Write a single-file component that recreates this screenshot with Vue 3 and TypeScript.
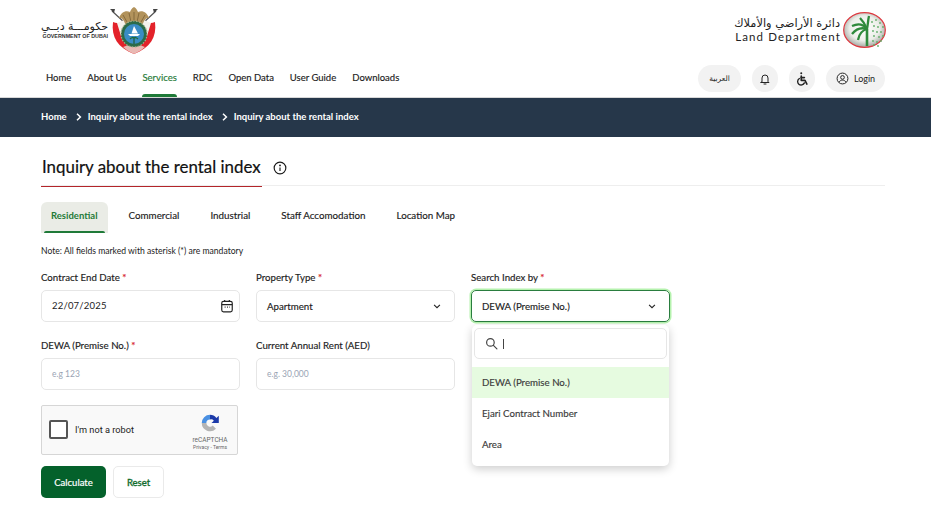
<script setup lang="ts">
import { ref } from 'vue'

const navItems = ['Home', 'About Us', 'Services', 'RDC', 'Open Data', 'User Guide', 'Downloads']
const tabs = ['Residential', 'Commercial', 'Industrial', 'Staff Accomodation', 'Location Map']
const options = ['DEWA (Premise No.)', 'Ejari Contract Number', 'Area']
const activeTab = ref('Residential')
const activeNav = ref('Services')
const palmFronds = [
  'M24 17C20 12 16 11 9 14',
  'M24 17C18 15 13 17 9 22',
  'M24 17C20 18 16 22 15 28',
  'M24 17C22 12 20 9 17 6',
  'M24 17C25 12 25 8 26 4',
]
const palmDots = [
  [29, 10], [33, 8], [37, 11], [31, 14], [35, 15], [40, 15], [30, 19], [34, 20], [38, 20],
  [31, 24], [36, 25], [40, 24], [30, 29], [34, 30], [38, 29], [31, 33], [35, 34],
]
</script>

<template>
  <div class="page">
    <header class="brand-row">
      <div class="gov-logo">
        <div class="gov-text">
          <span class="gov-ar">حكومـــة دبــي</span>
          <span class="gov-en">GOVERNMENT OF DUBAI</span>
        </div>
        <svg class="emblem" width="48" height="49" viewBox="0 0 48 49">
          <path d="M2 5l13 12M46 5L33 17" stroke="#555" stroke-width="1.2" />
          <path d="M0 3l5 0-1 4zM48 3l-5 0 1 4z" fill="#444" />
          <path d="M3 16c4 2 7 1 10-1h22c3 2 6 3 10 1 2 15-5 26-21 32C8 42 1 31 3 16z" fill="#e3222a" />
          <path d="M7 17l7-3 4 6-7 10zM41 17l-7-3-4 6 7 10z" fill="#f6f2ec" />
          <path d="M13 41c3 3 7 5 11 7 4-2 8-4 11-7l-11-4z" fill="#e9b9b4" />
          <path d="M24 1c2.500 1 3 3 4 5 5-2 9 1 11 6-2.500-.5-3 .5-5 3l-2 5H16l-2-5c-2-2.500-2.500-3.500-5-3 2-5 6-8 11-6 1-2 1.500-4 4-5z" fill="#b2935c" />
          <path d="M13 9l4 7M19 7l2 9M29 7l-2 9M35 9l-4 7M24 6v10" stroke="#7a5f36" stroke-width=".8" />
          <circle cx="24" cy="28" r="13" fill="#2c6b48" />
          <circle cx="24" cy="28" r="13" fill="none" stroke="#a3b18a" stroke-width="1.200" stroke-dasharray="1.500 1.500" />
          <circle cx="24" cy="28" r="10" fill="#3a8cc4" />
          <path d="M18 28h12l-2 2h-8z" fill="#fff" />
          <path d="M24 20l4 7.500h-6.500z" fill="#fff" />
          <path d="M24 38v-6" stroke="#1e5c34" stroke-width="1.200" />
          <path d="M24 32c-2-1-3 0-4 1M24 32c2-1 3 0 4 1M24 32c-1-1-2-1-2 0M24 32c1-1 2-1 2 0" stroke="#1e6c3a" stroke-width="1.100" fill="none" />
        </svg>
      </div>
      <div class="land-logo">
        <div class="land-text">
          <span class="land-ar">دائرة الأراضي والأملاك</span>
          <span class="land-en">Land Department</span>
        </div>
        <svg width="43" height="36" viewBox="0 0 43 36">
          <defs>
            <radialGradient id="globe" cx="50%" cy="45%" r="55%">
              <stop offset="0%" stop-color="#ffffff" />
              <stop offset="65%" stop-color="#eceee9" />
              <stop offset="100%" stop-color="#a4a8a2" />
            </radialGradient>
          </defs>
          <ellipse cx="21.500" cy="18" rx="20.800" ry="17.300" fill="url(#globe)" stroke="#dd3940" stroke-width="1.200" />
          <path d="M24 17v17" stroke="#2f8a3c" stroke-width="2.600" />
          <path v-for="d in palmFronds" :key="d" :d="d" stroke="#2f8a3c" stroke-width="2.300" fill="none" />
          <circle v-for="p in palmDots" :key="p.join()" :cx="p[0]" :cy="p[1]" r=".9" fill="#62ad69" />
        </svg>
      </div>
    </header>

    <nav class="nav-row">
      <ul class="nav-list">
        <li v-for="item in navItems" :key="item" class="nav-item" :class="{ active: item === activeNav }">{{ item }}</li>
      </ul>
      <div class="nav-actions">
        <button class="pill lang">العربية</button>
        <button class="pill round">
          <svg width="12" height="12" viewBox="0 0 24 24" fill="none" stroke="#222" stroke-width="2" stroke-linecap="round" stroke-linejoin="round">
            <path d="M6 17V10a6 6 0 0 1 12 0v7l2 2H4z" />
            <path d="M10 22h4" />
          </svg>
        </button>
        <button class="pill round">
          <svg width="15" height="15" viewBox="0 0 24 24" fill="none" stroke="#222" stroke-width="2.600" stroke-linecap="round" stroke-linejoin="round">
            <circle cx="10" cy="3.500" r="1.600" fill="#222" stroke="none" />
            <path d="M10 8v7h6l3 6" />
            <path d="M10 10.500h5" />
            <path d="M7 12a5.600 5.600 0 1 0 8 7" stroke-width="2.200" />
          </svg>
        </button>
        <button class="pill login">
          <svg width="13" height="13" viewBox="0 0 24 24" fill="none" stroke="#222" stroke-width="1.800">
            <circle cx="12" cy="12" r="10" />
            <circle cx="12" cy="10" r="3.400" />
            <path d="M5.500 19c1.500-3 4-4 6.500-4s5 1 6.500 4" />
          </svg>
          Login
        </button>
      </div>
    </nav>

    <div class="crumbs">
      <span>Home</span>
      <svg class="crumb-sep" width="6" height="8" viewBox="0 0 6 8" fill="none" stroke="#fff" stroke-width="1.500"><path d="M1 .8L4.400 4 1 7.200" /></svg>
      <span>Inquiry about the rental index</span>
      <svg class="crumb-sep" width="6" height="8" viewBox="0 0 6 8" fill="none" stroke="#fff" stroke-width="1.500"><path d="M1 .8L4.400 4 1 7.200" /></svg>
      <span>Inquiry about the rental index</span>
    </div>

    <main class="content">
      <div class="title-row">
        <h1 class="title">Inquiry about the rental index</h1>
        <svg width="14" height="14" viewBox="0 0 24 24" fill="none" stroke="#1a1a1a" stroke-width="2">
          <circle cx="12" cy="12" r="10" />
          <path d="M12 11v6" />
          <circle cx="12" cy="7.500" r=".6" />
        </svg>
      </div>

      <div class="tabs">
        <div v-for="tab in tabs" :key="tab" class="tab" :class="{ active: tab === activeTab }">{{ tab }}</div>
      </div>

      <p class="note">Note: All fields marked with asterisk (*) are mandatory</p>

      <div class="form-grid">
        <div class="field">
          <label>Contract End Date <i>*</i></label>
          <div class="box date">
            <span>22/07/2025</span>
            <svg width="14" height="14" viewBox="0 0 24 24" fill="none" stroke="#222" stroke-width="2" stroke-linejoin="round">
              <rect x="3" y="4" width="18" height="18" rx="3" />
              <path d="M3 9.500h18M8 1.500V5M16 1.500V5" />
              <path d="M8 14h1.500M12 14h1.500M16 14h1" />
            </svg>
          </div>
        </div>
        <div class="field">
          <label>Property Type <i>*</i></label>
          <div class="box">
            <span>Apartment</span>
            <svg class="chev" width="8" height="5" viewBox="0 0 9 6" fill="none" stroke="#222" stroke-width="1.300"><path d="M1 1l3.500 3.500L8 1" /></svg>
          </div>
        </div>
        <div class="field">
          <label>Search Index by <i>*</i></label>
          <div class="box focused">
            <span>DEWA (Premise No.)</span>
            <svg class="chev" width="8" height="5" viewBox="0 0 9 6" fill="none" stroke="#222" stroke-width="1.300"><path d="M1 1l3.500 3.500L8 1" /></svg>
          </div>
          <div class="dropdown">
            <div class="search">
              <svg width="13" height="13" viewBox="0 0 24 24" fill="none" stroke="#444" stroke-width="2.200" stroke-linecap="round">
                <circle cx="10" cy="10" r="7" />
                <path d="M15.500 15.500L22 22" />
              </svg>
              <span class="caret"></span>
            </div>
            <div v-for="(opt, i) in options" :key="opt" class="option" :class="{ selected: i === 0 }">{{ opt }}</div>
          </div>
        </div>
        <div class="field">
          <label>DEWA (Premise No.) <i>*</i></label>
          <div class="box placeholder"><span>e.g 123</span></div>
        </div>
        <div class="field">
          <label>Current Annual Rent (AED)</label>
          <div class="box placeholder"><span>e.g. 30,000</span></div>
        </div>
      </div>

      <div class="captcha">
        <span class="check"></span>
        <span class="robot">I'm not a robot</span>
        <div class="cap-brand">
          <svg width="22" height="22" viewBox="0 0 24 24" fill="none">
            <path d="M3 11a9 9 0 0 1 9-9v5a4 4 0 0 0-4 4z" fill="#4a90e2" />
            <path d="M12 2a9 9 0 0 1 7 3.400l2.600-2.400V11h-8l2.600-2.600A4 4 0 0 0 12 7z" fill="#1c3aa9" />
            <path d="M3 11h5a4 4 0 0 0 7 2.600l3.500 3.500A9 9 0 0 1 3 11z" fill="#b4b4b4" />
          </svg>
          <span class="cap-name">reCAPTCHA</span>
          <span class="cap-links">Privacy - Terms</span>
        </div>
      </div>

      <div class="actions">
        <button class="btn primary">Calculate</button>
        <button class="btn ghost">Reset</button>
      </div>
    </main>
  </div>
</template>

<style scoped>
.page {
  width: 931px;
  height: 517px;
  overflow: hidden;
  background: #fff;
  color: #1c1c1c;
  font-family: Lato, "DejaVu Sans", sans-serif;
  font-size: 9.5px;
}

.brand-row {
  height: 60px;
  padding: 6px 45px 0 41px;
  box-sizing: border-box;
  display: flex;
  justify-content: space-between;
  align-items: flex-start;
}

.gov-logo {
  display: flex;
  align-items: center;
  gap: 2px;
}

.gov-text {
  display: flex;
  flex-direction: column;
  align-items: flex-end;
  margin-top: -2px;
}

.gov-ar {
  font-family: "DejaVu Sans", sans-serif;
  font-size: 11px;
  line-height: 13px;
  color: #222;
}

.gov-en {
  font-family: "Liberation Sans", sans-serif;
  font-size: 5.350px;
  font-weight: 700;
  line-height: 7px;
  color: #333;
}

.land-logo {
  display: flex;
  align-items: center;
  gap: 3px;
  margin-top: 6px;
}

.land-text {
  display: flex;
  flex-direction: column;
  align-items: flex-end;
}

.land-ar {
  font-family: "DejaVu Sans", sans-serif;
  font-size: 11.400px;
  line-height: 14px;
  color: #222;
}

.land-en {
  font-size: 11.500px;
  line-height: 14px;
  letter-spacing: 1.150px;
  margin-right: -1px;
  color: #222;
}

.nav-row {
  height: 37px;
  padding: 0 46px;
  display: flex;
  justify-content: space-between;
  align-items: flex-start;
  border-bottom: 1px solid #d8d8d8;
}

.nav-list {
  display: flex;
  gap: 16px;
  list-style: none;
  margin: 0;
  padding: 0;
  height: 100%;
}

.nav-item {
  position: relative;
  font-size: 9.500px;
  line-height: 35px;
  -webkit-text-stroke: .15px currentColor;
}

.nav-item.active {
  color: #1f7a38;
}

.nav-item.active::after {
  content: "";
  position: absolute;
  left: 0;
  right: 0;
  bottom: 0;
  height: 3px;
  border-radius: 3px 3px 0 0;
  background: #1f7a38;
}

.nav-actions {
  display: flex;
  gap: 11px;
  margin-top: 5px;
}

.pill {
  height: 27px;
  border: 0;
  border-radius: 14px;
  background: #f2f2f2;
  color: #222;
  display: flex;
  align-items: center;
  justify-content: center;
  padding: 0;
  font-family: inherit;
  font-size: 9px;
}

.lang {
  width: 43px;
  font-family: "DejaVu Sans", sans-serif;
  font-size: 7.500px;
}

.round {
  width: 26px;
}

.login {
  width: 59px;
  gap: 5px;
}

.crumbs {
  height: 39px;
  box-sizing: border-box;
  padding: 0 0 2px 41px;
  background: #26374a;
  color: #fff;
  display: flex;
  align-items: center;
  font-size: 9.500px;
  font-weight: 700;
}

.crumb-sep {
  margin: 0 6px 0 9px;
}

.content {
  padding: 0 46px 0 41px;
}

.title-row {
  height: 49px;
  box-sizing: border-box;
  padding-top: 18px;
  display: flex;
  align-items: flex-start;
  gap: 11px;
  border-bottom: 1px solid #eee;
}

.title-row svg {
  margin-top: 6px;
}

.title {
  margin: 0 0 -1px;
  font-size: 16.900px;
  line-height: 24px;
  font-weight: 400;
  color: #111;
  height: 31px;
  padding: 0 1px;
  border-bottom: 1px solid #b3252a;
  -webkit-text-stroke: .2px currentColor;
}

.tabs {
  display: flex;
  gap: 11px;
  margin-top: 16px;
  height: 31px;
}

.tab {
  padding: 0 10px;
  font-size: 9.800px;
  line-height: 27px;
  -webkit-text-stroke: .15px currentColor;
}

.tab.active {
  position: relative;
  background: #eaece6;
  border-radius: 6px 6px 0 0;
  color: #1f7a38;
  font-size: 9.500px;
  font-weight: 700;
  -webkit-text-stroke: 0;
}

.tab.active::after {
  content: "";
  position: absolute;
  left: 3px;
  right: 3px;
  bottom: 0;
  height: 2px;
  border-radius: 2px 2px 0 0;
  background: #1f7a38;
}

.note {
  margin: 12px 0 0;
  font-size: 8.600px;
  line-height: 12px;
  color: #222;
}

.form-grid {
  margin-top: 14px;
  display: grid;
  grid-template-columns: repeat(3, 199px);
  column-gap: 16px;
  row-gap: 17px;
}

.field {
  position: relative;
}

.field label {
  display: block;
  font-size: 9.700px;
  line-height: 12px;
  margin-bottom: 7px;
  -webkit-text-stroke: .15px currentColor;
}

.field label i {
  color: #d8282f;
  font-style: normal;
}

.box {
  height: 32px;
  box-sizing: border-box;
  border: 1px solid #e6e6e6;
  border-radius: 5px;
  padding: 0 10px;
  display: flex;
  align-items: center;
  justify-content: space-between;
  font-size: 9.700px;
  -webkit-text-stroke: .15px currentColor;
}

.box.date {
  font-size: 9.500px;
  padding-right: 5px;
  letter-spacing: .2px;
  -webkit-text-stroke: 0;
}

.box.date span {
  margin-top: -1px;
}

.chev {
  margin-right: 3px;
}

.box.focused {
  border-color: #2a7d3f;
  box-shadow: 0 0 0 1.500px #b5f2ae;
}

.box.placeholder {
  color: #9aa4b4;
  font-size: 8.500px;
  -webkit-text-stroke: 0;
}

.dropdown {
  position: absolute;
  left: 1px;
  right: 1px;
  top: 54px;
  height: 141px;
  background: #fff;
  border-radius: 5px;
  box-shadow: 0 3px 10px rgba(0, 0, 0, .2);
  z-index: 2;
  padding-top: 3px;
  box-sizing: border-box;
}

.search {
  height: 31px;
  margin: 0 2px 8px;
  box-sizing: border-box;
  border: 1px solid #e6e6e6;
  border-radius: 5px;
  display: flex;
  align-items: center;
  gap: 5px;
  padding-left: 10px;
}

.caret {
  width: 1px;
  height: 10px;
  background: #444;
}

.option {
  height: 31px;
  line-height: 30px;
  padding-left: 10px;
  font-size: 9.700px;
  color: #3b3b3b;
  -webkit-text-stroke: .15px currentColor;
}

.option.selected {
  background: #e6fbe0;
}

.captcha {
  margin-top: 15px;
  width: 197px;
  height: 50px;
  box-sizing: border-box;
  border: 1px solid #d6d6d6;
  border-radius: 2px;
  background: #f9f9f9;
  display: flex;
  align-items: center;
  padding: 0 7px;
  font-family: Roboto, sans-serif;
}

.check {
  width: 19px;
  height: 19px;
  box-sizing: border-box;
  border: 2px solid #555;
  border-radius: 2px;
  background: #fff;
  margin: -1px 7px 0 0;
}

.robot {
  font-size: 9.200px;
  color: #222;
  margin-top: -1px;
}

.cap-brand {
  margin: 3px 1px 0 auto;
  display: flex;
  flex-direction: column;
  align-items: center;
  width: 38px;
  color: #666;
}

.cap-name {
  font-size: 6.500px;
  line-height: 7px;
  margin-top: 2px;
}

.cap-links {
  font-size: 5px;
  line-height: 7px;
  white-space: nowrap;
}

.actions {
  display: flex;
  gap: 7px;
  margin-top: 11px;
}

.btn {
  height: 32px;
  border-radius: 5px;
  font-family: inherit;
  font-size: 9.500px;
  padding: 0;
  -webkit-text-stroke: .2px currentColor;
}

.btn.primary {
  width: 65px;
  border: 0;
  background: #04612b;
  color: #fff;
}

.btn.ghost {
  width: 51px;
  border: 1px solid #eaeaea;
  background: #fff;
  color: #0f6b2b;
  -webkit-text-stroke: .35px currentColor;
}
</style>

<style>
html, body {
  margin: 0;
  background: #fff;
}
</style>
